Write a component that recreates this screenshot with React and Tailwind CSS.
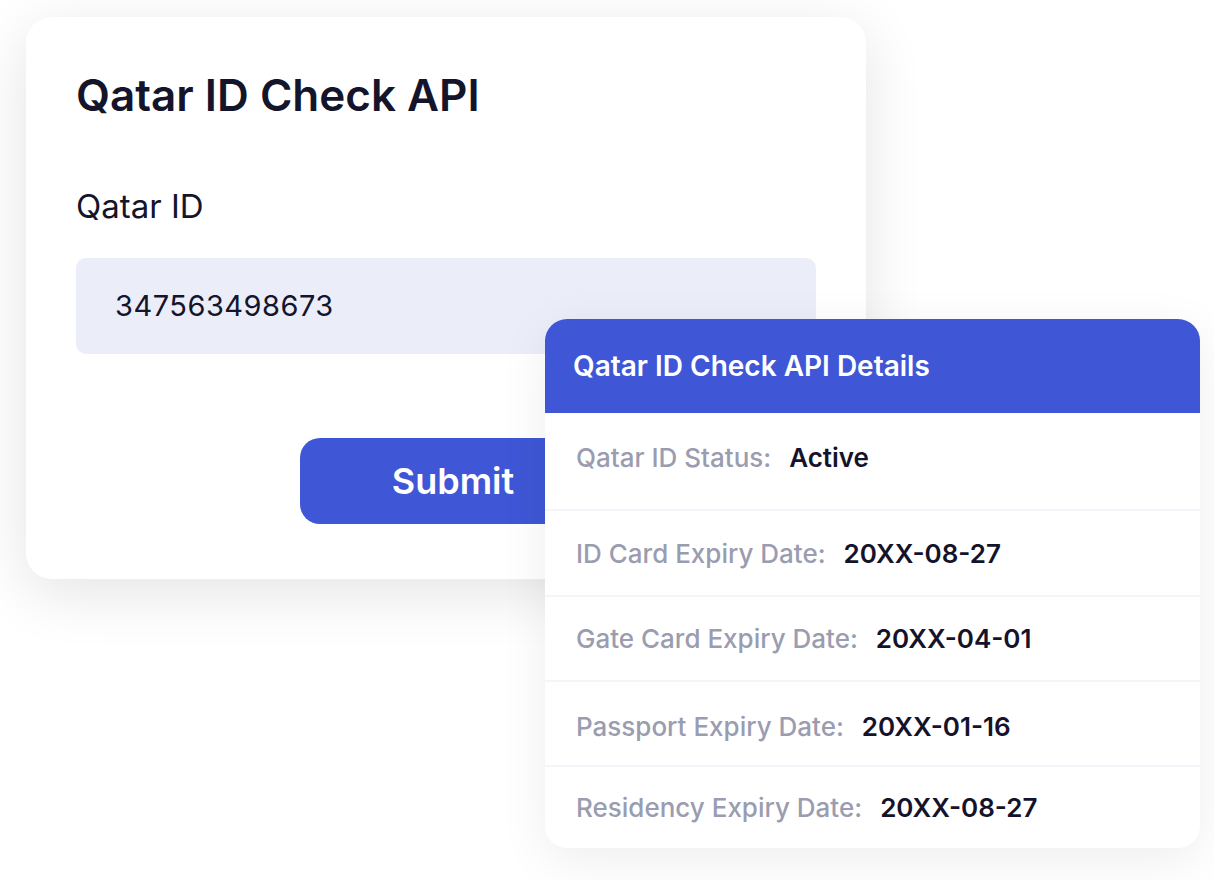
import React from 'react';

const rows = [
  { label: 'Qatar ID Status:', value: 'Active', h: 'h-[96px] pb-[8px]' },
  { label: 'ID Card Expiry Date:', value: '20XX-08-27', h: 'h-[86px]' },
  { label: 'Gate Card Expiry Date:', value: '20XX-04-01', h: 'h-[85px]' },
  { label: 'Passport Expiry Date:', value: '20XX-01-16', h: 'h-[85px] pt-[6px]' },
  { label: 'Residency Expiry Date:', value: '20XX-08-27', h: 'h-[83px]' },
];

const App = () => {
  return (
    <div
      className="relative w-[1214px] h-[880px] bg-white overflow-hidden"
      style={{ fontFamily: 'Inter, "Noto Sans", sans-serif' }}
    >
      {/* Request card */}
      <div className="ml-[26px] mt-[17px] w-[840px] rounded-[26px] bg-white px-[50px] pt-[52px] pb-[55px] shadow-[0_14px_60px_rgba(0,0,0,0.11)]">
        <h1 className="text-[44px] leading-[53px] font-semibold text-[#14142b]">
          Qatar ID Check API
        </h1>
        <label className="block mt-[65px] text-[33px] leading-[39px] text-[#14142b]">Qatar ID</label>
        <div className="mt-[32px] h-[96px] rounded-[10px] bg-[#ebedf9] pl-[39px] flex items-center">
          <span className="text-[29px] tracking-[0.5px] text-[#14142b]">347563498673</span>
        </div>
        <button className="mt-[84px] ml-[224px] w-[306px] h-[86px] rounded-[20px] bg-[#3f57d6] text-white text-[36px] font-semibold flex items-center justify-center">
          Submit
        </button>
      </div>

      {/* Result card */}
      <div className="absolute left-[545px] top-[319px] w-[655px] rounded-[22px] bg-white overflow-hidden shadow-[0_12px_50px_rgba(0,0,0,0.07)]">
        <div className="h-[94px] bg-[#3f57d6] pl-[28px] flex items-center">
          <span className="text-[28px] font-semibold text-white">Qatar ID Check API Details</span>
        </div>
        {rows.map((r, i) => (
          <div
            key={r.label}
            className={`${r.h} flex items-center pl-[31px] text-[26px] ${i > 0 ? 'border-t-2 border-[#f4f5fa]' : ''}`}
          >
            <span className="font-medium text-[#9a9cb0]">{r.label}</span>
            <span className="ml-[18px] font-semibold text-[#14132b]">{r.value}</span>
          </div>
        ))}
      </div>
    </div>
  );
};

export default App;
